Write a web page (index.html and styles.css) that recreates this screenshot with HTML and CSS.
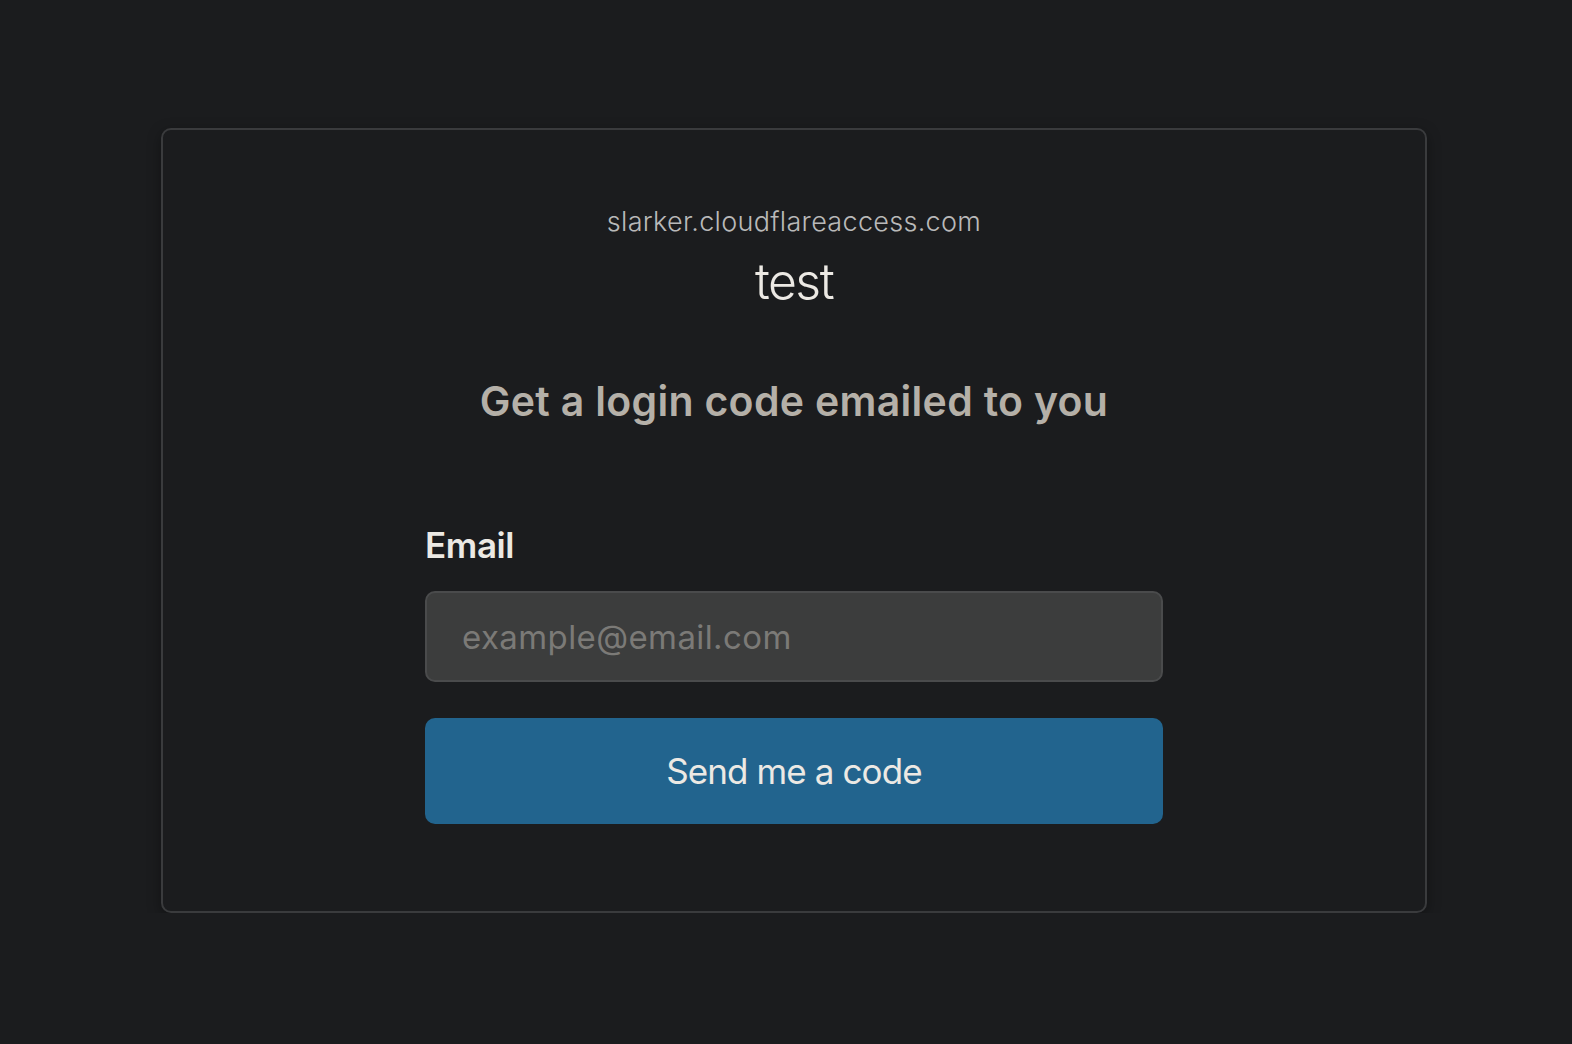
FILE: index.html
```html
<!DOCTYPE html>
<html lang="en">
<head>
<meta charset="utf-8">
<title>Sign in</title>
<link rel="stylesheet" href="styles.css">
</head>
<body>
<main class="page">
  <section class="card">
    <div class="domain">slarker.cloudflareaccess.com</div>
    <div class="app-name">test</div>
    <h1 class="title">Get a login code emailed to you</h1>
    <form class="form">
      <label class="label" for="email">Email</label>
      <input class="input" id="email" type="email" placeholder="example@email.com">
      <button class="button" type="button">Send me a code</button>
    </form>
  </section>
</main>
</body>
</html>
```
FILE: styles.css
```css
html, body {
  margin: 0;
  padding: 0;
  background: #1b1c1e;
}
body {
  font-family: Inter, "Noto Sans", sans-serif;
  color: #e8e6e3;
}
.page {
  padding: 128px 0 0 161px;
}
.card {
  box-sizing: border-box;
  width: 1266px;
  height: 785px;
  border: 2px solid #3a3b3d;
  border-radius: 10px;
  background: #1b1c1e;
  box-shadow: 0 4px 14px rgba(0, 0, 0, 0.35);
  display: flex;
  flex-direction: column;
  align-items: center;
  padding-top: 74px;
}
.domain {
  font-size: 27px;
  font-weight: 300;
  color: #b9b9b9;
  line-height: 36px;
  letter-spacing: 0.3px;
}
.app-name {
  font-size: 50px;
  font-weight: 300;
  color: #ece9e4;
  line-height: 60px;
  margin-top: 11px;
  letter-spacing: -1.5px;
}
.title {
  margin: 64px 0 0;
  font-size: 41px;
  font-weight: 600;
  color: #b5b0a8;
  line-height: 52px;
  letter-spacing: 0.3px;
}
.form {
  width: 738px;
  display: flex;
  flex-direction: column;
  margin-top: 96px;
}
.label {
  font-size: 35px;
  font-weight: 600;
  color: #ece9e4;
  line-height: 44px;
  letter-spacing: -0.4px;
}
.input {
  box-sizing: border-box;
  margin-top: 24px;
  height: 91px;
  border: 2px solid #4a4b4c;
  border-radius: 10px;
  background: #3c3d3d;
  padding: 0 35px;
  font-family: inherit;
  font-size: 33px;
  letter-spacing: 0.4px;
  color: #e8e6e3;
  outline: none;
}
.input::placeholder {
  color: #7b7a77;
}
.button {
  margin-top: 36px;
  height: 106px;
  border: none;
  border-radius: 10px;
  background: #22648e;
  color: #ece9e4;
  font-family: inherit;
  font-size: 35px;
  font-weight: 400;
  letter-spacing: -0.9px;
  cursor: pointer;
}
```
